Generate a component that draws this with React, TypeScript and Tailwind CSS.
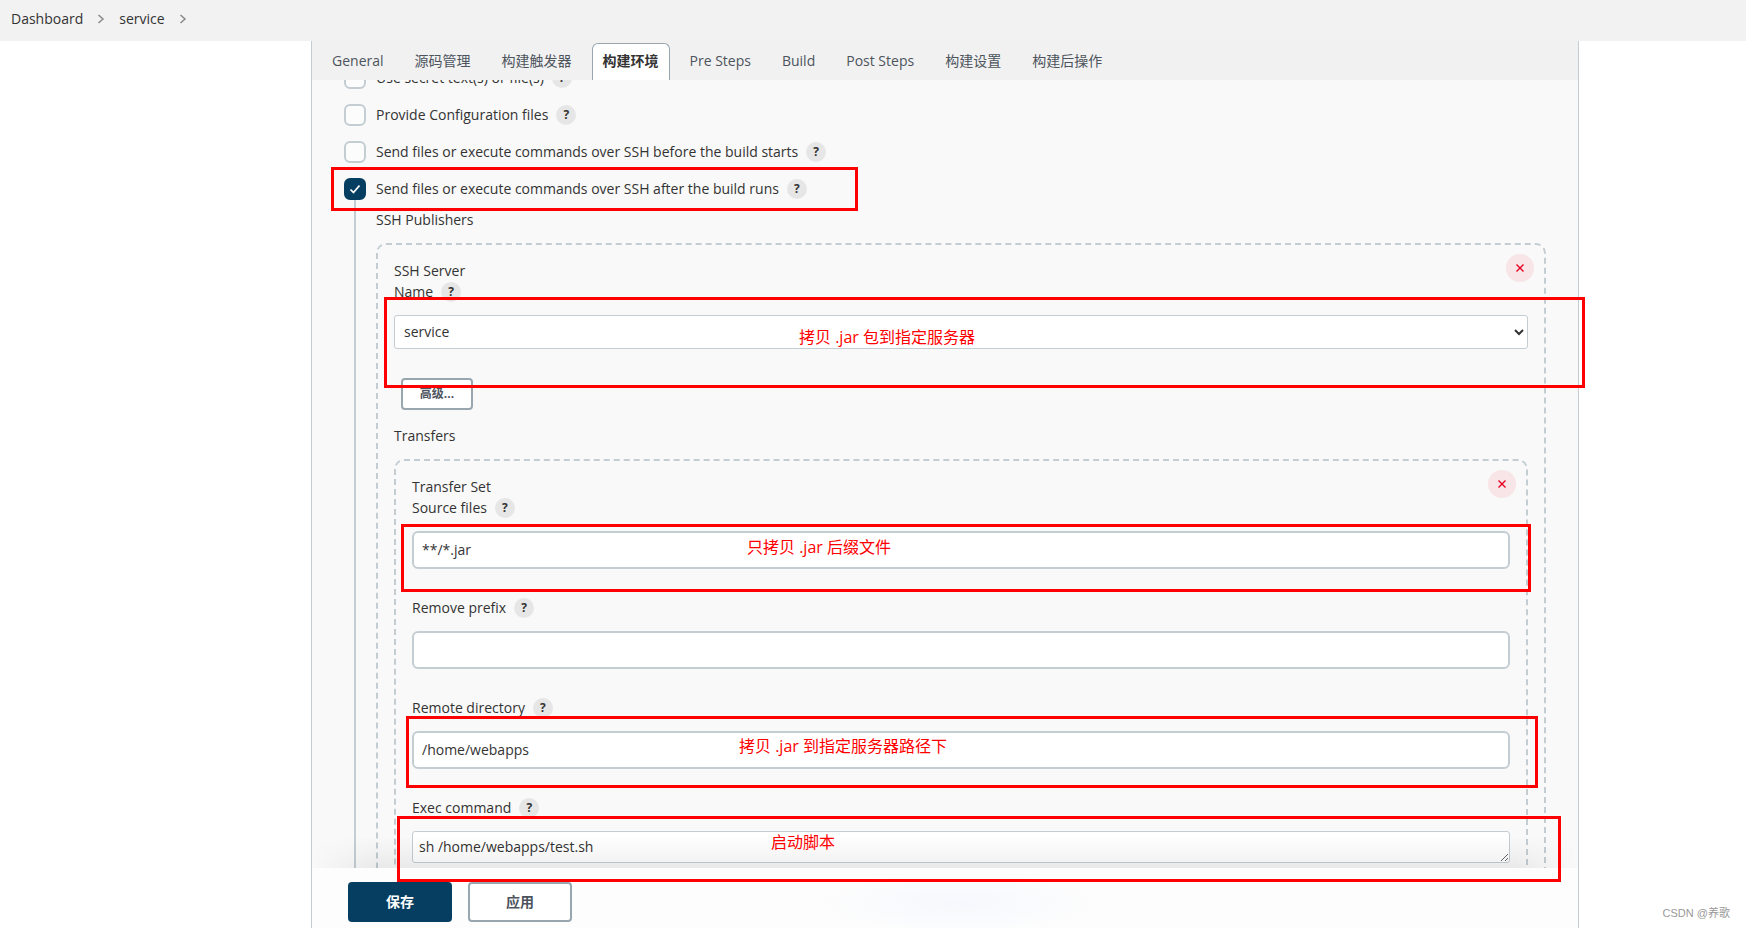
import { useState } from 'react'
import type { ReactNode } from 'react'

const tabs = [
  'General',
  '源码管理',
  '构建触发器',
  '构建环境',
  'Pre Steps',
  'Build',
  'Post Steps',
  '构建设置',
  '构建后操作',
]

const environmentOptions = [
  { id: 'secret-text', label: 'Use secret text(s) or file(s)', checked: false },
  { id: 'config-files', label: 'Provide Configuration files', checked: false },
  { id: 'ssh-before', label: 'Send files or execute commands over SSH before the build starts', checked: false },
  { id: 'ssh-after', label: 'Send files or execute commands over SSH after the build runs', checked: true },
]

// Red callouts drawn over the form
const notes = [
  { text: '', box: 'left-[331px] top-[167px] h-[44px] w-[527px]', label: '' },
  { text: '拷贝 .jar 包到指定服务器', box: 'left-[384px] right-[161px] top-[297px] h-[91px]', label: 'left-[412px] top-[25px]' },
  { text: '只拷贝 .jar 后缀文件', box: 'left-[401px] right-[215px] top-[524px] h-[68px]', label: 'left-[343px] top-[8px]' },
  { text: '拷贝 .jar 到指定服务器路径下', box: 'left-[406px] right-[208px] top-[716px] h-[72px]', label: 'left-[330px] top-[15px]' },
  { text: '启动脚本', box: 'left-[397px] right-[185px] top-[816px] h-[66px]', label: 'left-[371px] top-[11px]' },
]

function Chevron() {
  return (
    <svg className="h-3 w-2" viewBox="0 0 8 12" fill="none" stroke="#8a8a8a" strokeWidth="1.5" aria-hidden="true">
      <path d="M1.5 2l4.5 4-4.5 4" />
    </svg>
  )
}

function Help({ about }: { about: string }) {
  return (
    <button
      type="button"
      aria-label={`Help for ${about}`}
      className="flex h-5 w-5 shrink-0 items-center justify-center rounded-full bg-[#e6e6e6] text-xs font-bold text-[#333333]"
    >
      ?
    </button>
  )
}

function RemoveButton() {
  return (
    <button
      type="button"
      aria-label="Remove"
      className="absolute right-2.5 top-[9px] flex h-7 w-7 items-center justify-center rounded-full bg-[#f7e5e7]"
    >
      <svg className="h-2 w-2" viewBox="0 0 8 8" stroke="#e6001f" strokeWidth="1.4" aria-hidden="true">
        <path d="M0.5 0.5l7 7M7.5 0.5l-7 7" />
      </svg>
    </button>
  )
}

function Group({ title, children }: { title: string; children: ReactNode }) {
  return (
    <div className="relative mt-[13px] rounded-[10px] border-2 border-dashed border-[#c3cdd2] p-4">
      <RemoveButton />
      <div className="pb-px">{title}</div>
      {children}
    </div>
  )
}

function Field({ id, label, children }: { id: string; label: string; children: ReactNode }) {
  return (
    <div className="mb-[29px]">
      <div className="flex h-5 items-center gap-2">
        <label htmlFor={id}>{label}</label>
        <Help about={label} />
      </div>
      <div className="mt-[13px] flex">{children}</div>
    </div>
  )
}

function TextField({ id, label, value = '' }: { id: string; label: string; value?: string }) {
  return (
    <Field id={id} label={label}>
      <input
        id={id}
        type="text"
        defaultValue={value}
        className="h-[38px] w-full rounded-md border-2 border-[#c3cdd2] bg-white px-2 pb-0.5 outline-none"
      />
    </Field>
  )
}

function Option({ id, label, checked }: { id: string; label: string; checked: boolean }) {
  const [on, setOn] = useState(checked)

  return (
    <div className="flex h-[22px] items-center">
      <span className="relative mr-2.5 flex">
        <input
          id={id}
          type="checkbox"
          checked={on}
          onChange={() => setOn(!on)}
          className="h-[22px] w-[22px] appearance-none rounded-md border-2 border-[#c3cdd2] bg-[#fcfcfc] checked:border-[#063e61] checked:bg-[#063e61]"
        />
        {on && (
          <svg
            className="pointer-events-none absolute left-1.5 top-1.5 h-2.5 w-2.5"
            viewBox="0 0 10 10"
            fill="none"
            stroke="#ffffff"
            strokeWidth="1.7"
            aria-hidden="true"
          >
            <path d="M0.5 5.5l3 3 6-7" />
          </svg>
        )}
      </span>
      <label htmlFor={id} className="mr-2">
        {label}
      </label>
      <Help about={label} />
    </div>
  )
}

export default function App() {
  const [activeTab, setActiveTab] = useState('构建环境')

  return (
    <div className="relative flex h-screen flex-col overflow-hidden bg-white font-['Open_Sans','Noto_Sans_CJK_SC',sans-serif] text-sm leading-5 text-[#333333]">
      <nav className="flex h-[41px] shrink-0 items-center gap-3.5 bg-[#f2f2f2] px-[11px] pb-1">
        <a href="#dashboard">Dashboard</a>
        <Chevron />
        <a href="#service">service</a>
        <Chevron />
      </nav>

      <main className="ml-[311px] mr-[167px] flex min-h-0 flex-1 flex-col border-x border-[#c3cdd2] bg-[#f9f9f9]">
        {/* Section tabs */}
        <div className="flex h-[39px] shrink-0 items-end gap-[9px] bg-[#f1f1f1] px-[9px]">
          {tabs.map((tab) => (
            <button
              key={tab}
              type="button"
              onClick={() => setActiveTab(tab)}
              className={
                tab === activeTab
                  ? 'h-[37px] rounded-t-md border border-b-0 border-[#98a6b0] bg-white px-2.5 pb-0.5 font-bold'
                  : 'h-[37px] border border-b-0 border-transparent px-2.5 pb-0.5 text-[#4d545d]'
              }
            >
              {tab}
            </button>
          ))}
        </div>

        {/* Form */}
        <div className="min-h-0 flex-1 overflow-hidden px-8">
          <div className="-mt-[13px] flex flex-col gap-[15px]">
            {environmentOptions.map((option) => (
              <Option key={option.id} {...option} />
            ))}
          </div>

          <div className="ml-2.5 border-l-2 border-[#c3cdd2] pl-5 pt-2.5">
            <div>SSH Publishers</div>
            <Group title="SSH Server">
              <Field id="server-name" label="Name">
                <select
                  id="server-name"
                  className="h-[34px] w-full rounded-[3px] border border-[#c3cdd2] bg-white pb-0.5 pl-[5px] outline-none"
                >
                  <option>service</option>
                </select>
              </Field>
              <button
                type="button"
                className="ml-[7px] flex h-8 w-[72px] items-center justify-center rounded border-2 border-[#98a6b0] bg-white text-xs font-bold text-[#4d545d]"
              >
                高级...
              </button>
              <div className="mt-4">Transfers</div>
              <Group title="Transfer Set">
                <TextField id="source-files" label="Source files" value="**/*.jar" />
                <TextField id="remove-prefix" label="Remove prefix" />
                <TextField id="remote-directory" label="Remote directory" value="/home/webapps" />
                <Field id="exec-command" label="Exec command">
                  <textarea
                    id="exec-command"
                    defaultValue="sh /home/webapps/test.sh"
                    className="h-8 w-full rounded-[3px] border border-[#c3cdd2] bg-white px-1.5 py-[5px] outline-none"
                  />
                </Field>
              </Group>
            </Group>
          </div>
        </div>

        {/* Sticky action bar */}
        <div className="relative flex h-[60px] shrink-0 items-start gap-4 bg-[#fdfdfd] bg-[radial-gradient(ellipse_140px_30px_at_51%_35px,#f5f8fd,transparent)] px-9 pt-3.5">
          <div className="pointer-events-none absolute inset-x-0 bottom-full h-8 bg-linear-to-t from-black/6 to-transparent mask-x-from-95% mask-x-to-100%" />
          <button type="button" className="h-10 w-[104px] rounded bg-[#063e61] font-bold text-white">
            保存
          </button>
          <button
            type="button"
            className="h-10 w-[104px] rounded border-2 border-[#98a6b0] bg-white font-bold text-[#4d545d]"
          >
            应用
          </button>
        </div>
      </main>

      {notes.map((note) => (
        <div key={note.box} className={`pointer-events-none absolute border-3 border-[#ff0000] ${note.box}`}>
          <span className={`absolute whitespace-nowrap text-base leading-6 text-[#ff0000] ${note.label}`}>
            {note.text}
          </span>
        </div>
      ))}

      <div className="absolute bottom-[7px] right-4 font-['Liberation_Sans','Noto_Sans_CJK_SC',sans-serif] text-[11px] leading-4 text-[#999999]">
        CSDN @养歌
      </div>
    </div>
  )
}
